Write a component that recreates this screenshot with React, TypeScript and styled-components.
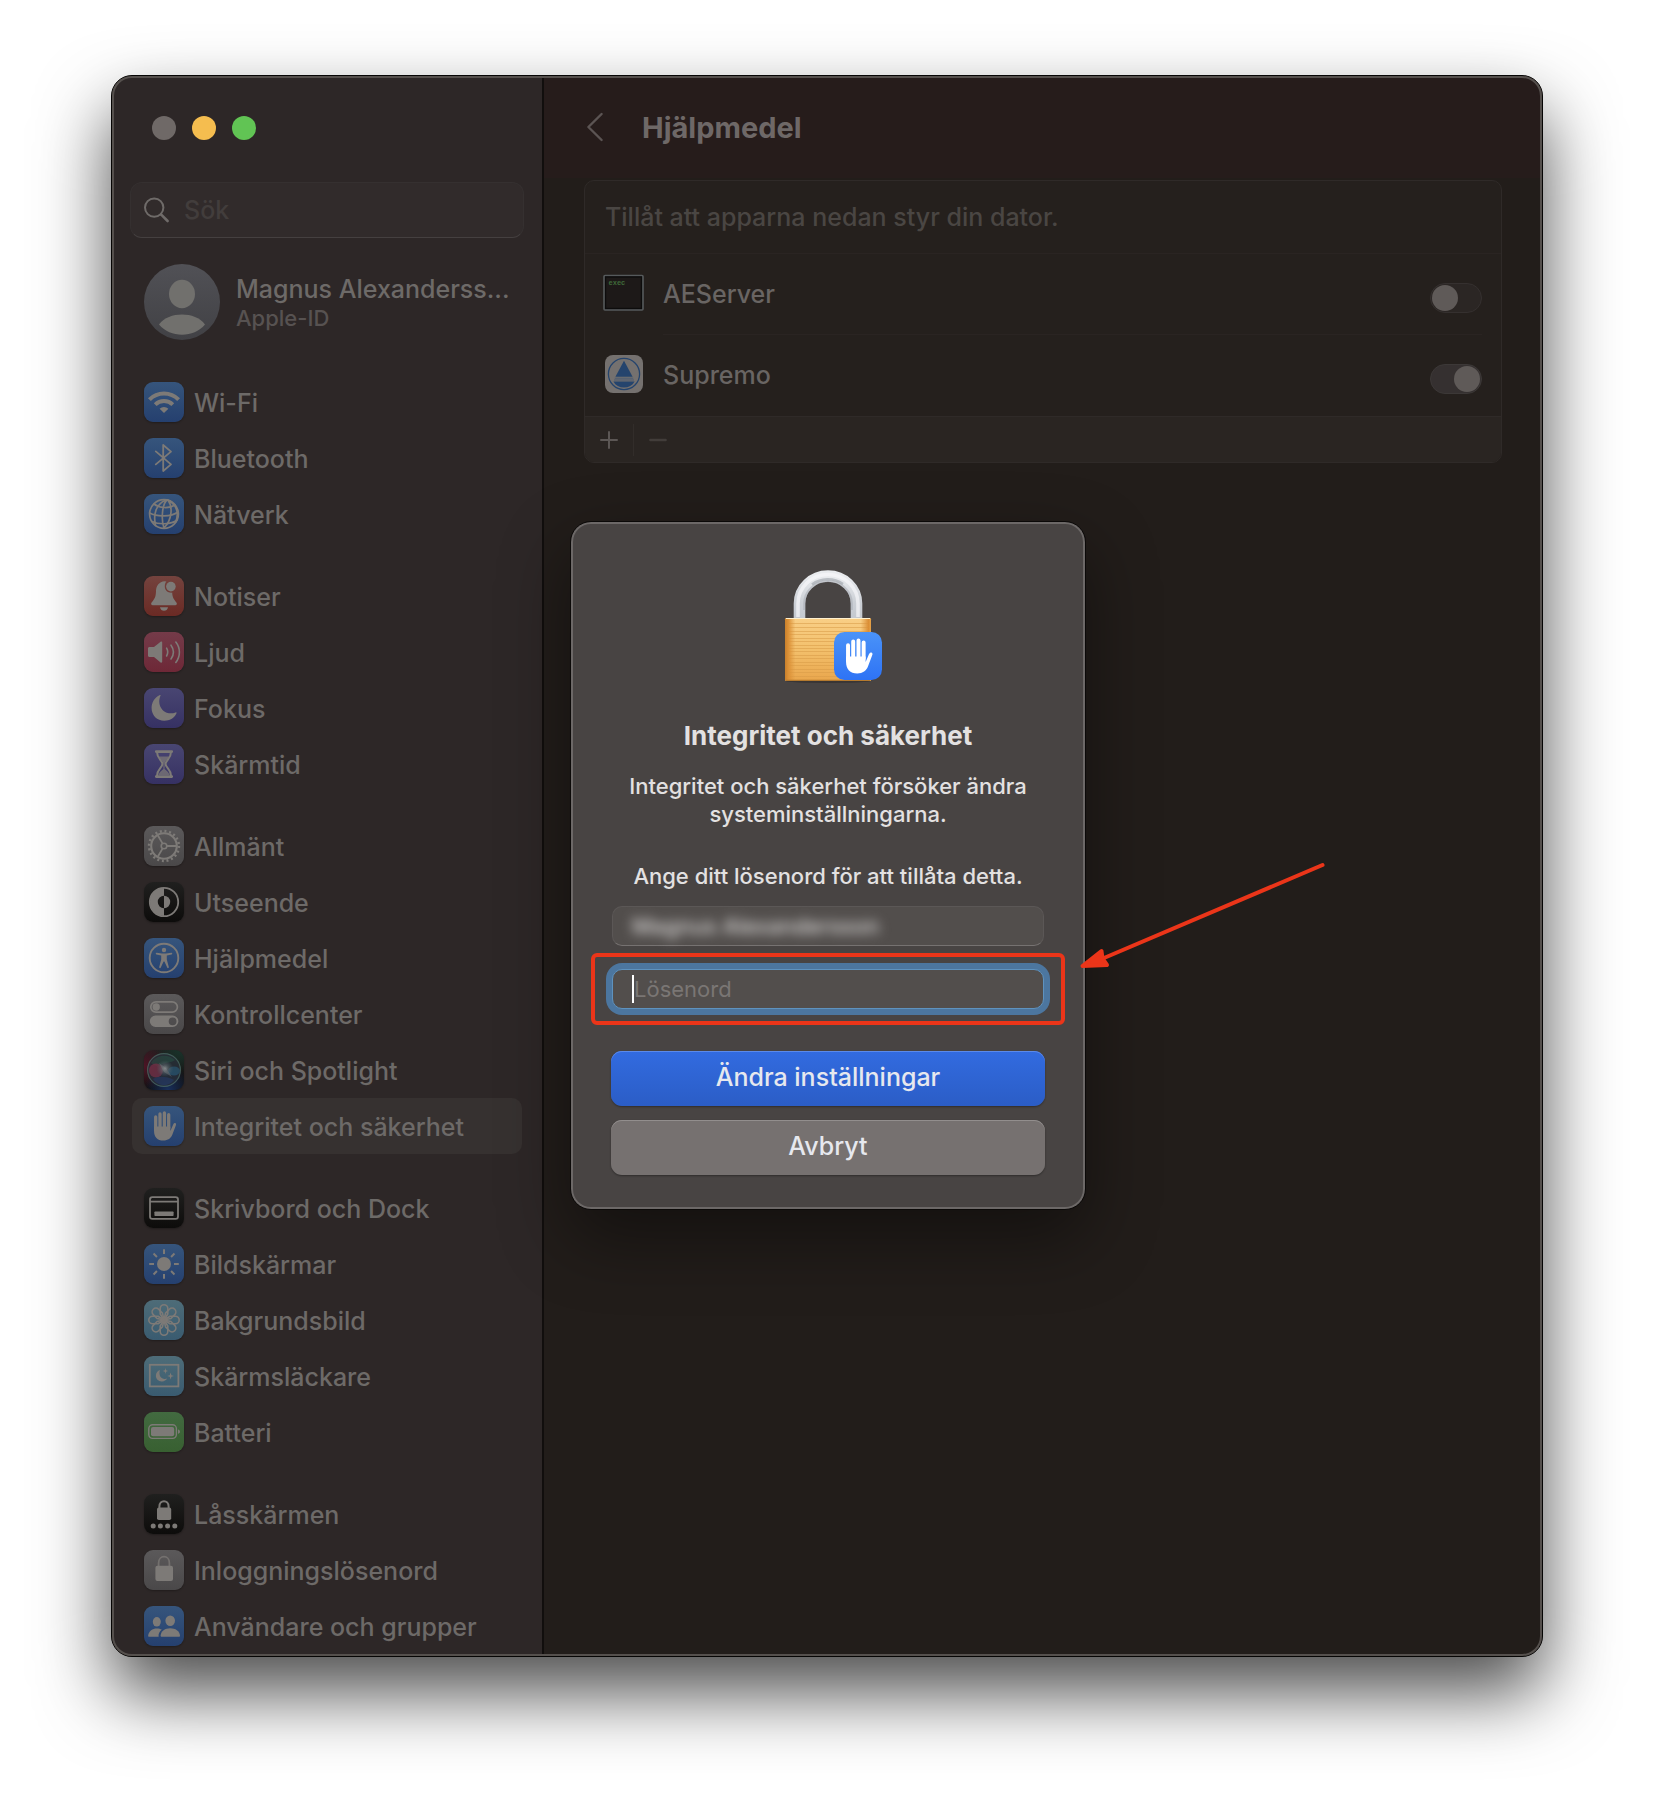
import React from "react";
import styled, { createGlobalStyle } from "styled-components";

const GlobalStyle = createGlobalStyle`
  *, *::before, *::after { box-sizing: border-box; }
  body {
    margin: 0;
    background: #ffffff;
    font-family: Inter, "Liberation Sans", sans-serif;
    font-weight: 500;
    -webkit-font-smoothing: antialiased;
  }
  h1, h2, p { margin: 0; }
  button, input { font-family: inherit; font-weight: inherit; }
`;

const text = { body: "25px", small: "22px", heading: "26px", title: "29px" };
const glyph = "#7d7a77";

/* ---------- window ---------- */

const Page = styled.div`
  padding: 75px 111px 147px;
`;

const Window = styled.div`
  position: relative;
  display: flex;
  border: 1px solid #060504;
  border-radius: 21px;
  background: #221d1a;
  box-shadow: 0 36px 72px rgba(0, 0, 0, 0.7);

  &::after {
    content: "";
    position: absolute;
    inset: 0;
    border-radius: 20px;
    box-shadow: inset 0 0 0 2px #55504d;
    pointer-events: none;
  }
`;

const Sidebar = styled.aside`
  flex: none;
  width: 432px;
  padding: 40px 18px 2px;
  border-right: 2px solid #110e0d;
  border-radius: 20px 0 0 20px;
  background: #2d2727;
`;

const Lights = styled.div`
  display: flex;
  gap: 16px;
  padding-left: 22px;
`;

const Light = styled.button<{ $color: string }>`
  width: 24px;
  height: 24px;
  padding: 0;
  border: 0;
  border-radius: 50%;
  background: ${(p) => p.$color};
`;

const SearchBox = styled.label`
  display: flex;
  align-items: center;
  gap: 14px;
  height: 56px;
  margin-top: 42px;
  padding: 0 13px;
  border: 1px solid #353030;
  border-bottom-color: #454040;
  border-radius: 12px;
  background: #312b2b;
`;

const SearchInput = styled.input`
  flex: 1;
  min-width: 0;
  padding: 0;
  border: 0;
  outline: 0;
  background: transparent;
  color: #6d6a68;
  font-size: ${text.body};
  line-height: 32px;
  &::placeholder { color: #423d3c; opacity: 1; }
`;

const Profile = styled.a`
  display: flex;
  align-items: center;
  gap: 16px;
  margin-top: 26px;
  padding-left: 14px;
  text-decoration: none;
`;

const ProfileText = styled.span`
  display: flex;
  flex-direction: column;
  white-space: nowrap;
`;

const ProfileName = styled.span`
  color: #6d6a68;
  font-size: ${text.body};
  line-height: 32px;
`;

const ProfileNote = styled.span`
  color: #575251;
  font-size: ${text.small};
  line-height: 26px;
`;

const Nav = styled.nav`
  display: flex;
  flex-direction: column;
  gap: 26px;
  margin-top: 34px;
  padding: 0 2px;
`;

const NavGroup = styled.div`
  display: flex;
  flex-direction: column;
`;

const NavItem = styled.a<{ $active: boolean }>`
  display: flex;
  align-items: center;
  gap: 10px;
  height: 56px;
  padding-left: 12px;
  border-radius: 10px;
  background: ${(p) => (p.$active ? "#363130" : "transparent")};
  color: #6d6a68;
  font-size: ${text.body};
  line-height: 32px;
  text-decoration: none;
  white-space: nowrap;
`;

const NavLabel = styled.span`
  padding-top: 2px;
`;

const Tile = styled.span<{ $from: string; $to: string }>`
  display: block;
  width: 40px;
  height: 40px;
  overflow: hidden;
  border-radius: 9px;
  background: linear-gradient(${(p) => p.$from}, ${(p) => p.$to});
  box-shadow: 0 1px 2px rgba(0, 0, 0, 0.3);
  svg { display: block; }
`;

/* ---------- content pane ---------- */

const Content = styled.main`
  flex: 1;
  min-width: 0;
`;

const TitleBar = styled.header`
  display: flex;
  align-items: center;
  gap: 38px;
  height: 102px;
  padding-left: 42px;
  border-radius: 0 20px 0 0;
  background: #261c1b;
`;

const BackButton = styled.button`
  padding: 0;
  border: 0;
  background: none;
  svg { display: block; }
`;

const Title = styled.h1`
  padding-top: 2px;
  color: #6e6867;
  font-size: ${text.title};
  font-weight: 700;
  line-height: 36px;
`;

const Card = styled.section`
  margin: 2px 40px 0;
  overflow: hidden;
  border: 1px solid #2f2a28;
  border-radius: 10px;
  background: #25201d;
`;

const CardIntro = styled.p`
  padding: 20px;
  border-bottom: 1px solid #2a2422;
  color: #4a4643;
  font-size: ${text.body};
  line-height: 32px;
`;

const AppRow = styled.label`
  display: grid;
  grid-template-columns: 42px 1fr;
  align-items: center;
  gap: 18px;
  padding: 0 19px 0 18px;
  svg { margin-bottom: 4px; }
`;

const AppRowBody = styled.span<{ $line: boolean }>`
  display: flex;
  align-items: center;
  justify-content: space-between;
  height: 81px;
  border-bottom: 1px solid ${(p) => (p.$line ? "#2a2422" : "transparent")};
  color: #696563;
  font-size: ${text.body};
  line-height: 32px;
`;

const Toggle = styled.input`
  appearance: none;
  width: 52px;
  height: 30px;
  margin: 8px 0 0;
  padding: 1px;
  border: 1px solid #35302f;
  border-radius: 15px;
  background: #2b2624;

  &::before {
    content: "";
    display: block;
    width: 26px;
    height: 26px;
    border-radius: 50%;
    background: #5f5a58;
  }
  &:checked { background: #353030; border-color: #3c3837; }
  &:checked::before { margin-left: auto; }
`;

const CardFooter = styled.div`
  display: flex;
  align-items: center;
  height: 46px;
  border-top: 1px solid #2f2a28;
  background: #2a2522;
`;

const FooterButton = styled.button`
  display: flex;
  align-items: center;
  justify-content: center;
  width: 48px;
  height: 32px;
  padding: 0;
  border: 0;
  background: none;
  & + & { border-left: 1px solid #322d2a; }
`;

/* ---------- authentication dialog ---------- */

const DialogLayer = styled.div`
  position: absolute;
  inset: 0;
  z-index: 1;
  display: flex;
  align-items: flex-start;
  justify-content: center;
  padding: 445px 0 0 2px;
`;

const Dialog = styled.form`
  display: flex;
  flex-direction: column;
  width: 516px;
  padding: 40px 40px 34px;
  border: 1px solid #0b0908;
  border-radius: 21px;
  background: #484443;
  box-shadow: inset 0 0 0 2px #6c6867, 0 28px 70px rgba(0, 0, 0, 0.42);
  color: #e3e1e1;
  text-align: center;
`;

const LockArt = styled.svg`
  align-self: center;
`;

const DialogTitle = styled.h2`
  margin-top: 30px;
  font-size: ${text.heading};
  font-weight: 700;
  line-height: 32px;
`;

const DialogText = styled.p`
  margin-top: 20px;
  font-size: ${text.small};
  line-height: 28px;
`;

const PasswordLabel = styled.label`
  margin-top: 34px;
  font-size: ${text.small};
  line-height: 28px;
`;

const Field = styled.div<{ $focused?: boolean }>`
  position: relative;
  display: flex;
  align-items: center;
  height: 40px;
  margin: ${(p) => (p.$focused ? "23px" : "16px")} 1px 0;
  padding: 0 19px;
  border: 1px solid ${(p) => (p.$focused ? "#5e92be" : "#5b5756")};
  border-bottom-color: ${(p) => (p.$focused ? "#5e92be" : "#767271")};
  border-radius: 10px;
  background: #524e4c;
  box-shadow: ${(p) => (p.$focused ? "0 0 0 6px #4c769f" : "none")};
`;

const FieldInput = styled.input<{ $blurred?: boolean }>`
  flex: 1;
  min-width: 0;
  padding: 0;
  border: 0;
  outline: 0;
  background: transparent;
  color: #dddbda;
  font-size: ${text.small};
  font-weight: ${(p) => (p.$blurred ? 500 : 400)};
  line-height: 28px;
  filter: ${(p) => (p.$blurred ? "blur(6px)" : "none")};
  &::placeholder { color: #7a7674; opacity: 1; }
`;

const Caret = styled.span`
  width: 2px;
  height: 28px;
  background: #ffffff;
`;

const Highlight = styled.span`
  position: absolute;
  inset: -17px -22px;
  border: 4px solid #eb3519;
  border-radius: 6px;
  pointer-events: none;
`;

const Arrow = styled.svg`
  position: absolute;
  left: 466px;
  top: -110px;
  pointer-events: none;
`;

const DialogButton = styled.button<{ $primary?: boolean }>`
  height: 55px;
  margin-top: ${(p) => (p.$primary ? "42px" : "14px")};
  padding: 0 0 3px;
  border: 0;
  border-radius: 11px;
  background: ${(p) => (p.$primary ? "linear-gradient(#326be0, #2b5dc6)" : "#767170")};
  box-shadow: inset 0 1px 0 ${(p) => (p.$primary ? "#5b8aea" : "#928e8d")}, 0 1px 2px rgba(0, 0, 0, 0.35);
  color: #e6e8ee;
  font-size: ${text.body};
  line-height: 32px;
`;

/* ---------- icon drawings, each on a 40 x 40 grid ---------- */

const Line = ({ w = 2, children }: { w?: number; children: React.ReactNode }) => (
  <g fill="none" stroke={glyph} strokeWidth={w} strokeLinecap="round" strokeLinejoin="round">
    {children}
  </g>
);

const Hand = ({ color = glyph }: { color?: string }) => (
  <g>
    <g stroke={color} strokeWidth="3.3" strokeLinecap="round">
      <path d="M11.7 11V24M16 8V22M20.4 7V22M24.7 8.7V22" />
    </g>
    <path
      fill={color}
      d="M10.05 20.5H26.35V25L29.2 18.4C29.8 17.2 30.7 16.8 31.5 17.2C32.2 17.6 32.2 18.3 31.9 19.2L28.3 28.8C27 32.2 24 34.6 19.4 34.6C13.4 34.6 10.05 31 10.05 25Z"
    />
  </g>
);

const icons: Record<string, React.ReactNode> = {
  wifi: (
    <>
      <g fill="none" stroke={glyph} strokeWidth="4">
        <path d="M5.4 17.6A20.4 20.4 0 0 1 34.6 17.6" />
        <path d="M11.2 22.6A12.7 12.7 0 0 1 28.8 22.6" />
      </g>
      <path d="M20 31L15.6 26.7A6.4 6.4 0 0 1 24.4 26.7Z" fill={glyph} />
    </>
  ),
  bluetooth: <Line w={1.8}><path d="M11.8 13.4L27 26.4L19.2 33V7L27 13.6L11.8 26.4" /></Line>,
  globe: (
    <Line w={1.7}>
      <circle cx="20" cy="20" r="14.4" />
      <path d="M23 6C18 10 17 26 20 34M24 6C29 13 28 26 20 34M22 6C12 10 9 20 11.5 31.5M26 7C34 13 35 20 31.5 28.5" />
      <path d="M10 10C15 14 25 15 31 11M5.6 19C13 23 27 23 34 18M8 27.5C14 30.5 27 31 33 26" />
    </Line>
  ),
  bell: (
    <>
      <path
        fill={glyph}
        d="M20.6 5.2C15 5.8 12.2 9.4 12 15C11.8 21.4 10.6 22.6 7.6 26.6C6.6 28 7.2 29.2 8.8 29.2H31.2C32.8 29.2 33.4 28 32.4 26.6C29.6 23 28.4 21.4 28.2 16.6C24 17 20.8 14.2 20.8 10.4C20.8 8.6 21.2 7 22.4 5.6Z"
      />
      <circle cx="26.9" cy="10.6" r="4.8" fill={glyph} />
      <path d="M16 31.2H24C23.6 33.6 22 34.8 20 34.8S16.4 33.6 16 31.2Z" fill={glyph} />
    </>
  ),
  sound: (
    <>
      <path d="M4 16.5C4 15.6 4.6 15 5.5 15H10L16.6 9.8C17.4 9.2 18.2 9.6 18.2 10.6V29.6C18.2 30.6 17.4 31 16.6 30.4L10 25H5.5C4.6 25 4 24.4 4 23.5Z" fill={glyph} />
      <Line w={1.6}><path d="M22.6 16.2C24 18.6 24 21.6 22.6 24M27 13.2C30 17.4 30 22.8 27 27M31.8 10C36.6 16 36.6 24.4 31.8 30.4" /></Line>
    </>
  ),
  moon: <path fill={glyph} d="M16.6 7.4C12 17 20 28.6 31.6 24.4C32.4 24.2 32.8 24.8 32.4 25.6C30 30.4 25.6 32.8 20.4 32.8C13 32.8 7.6 27.4 7.6 20C7.6 14.6 10.4 9.8 15.4 7.2C16.2 6.8 16.8 6.8 16.6 7.4Z" />,
  hourglass: (
    <>
      <Line w={2.6}><path d="M12.2 7.6H27.8M12.2 32.6H27.8" /></Line>
      <Line w={2}>
        <path d="M13 8C13 15 18.4 16 18.4 20S13 25 13 32M27 8C27 15 21.6 16 21.6 20S27 25 27 32" />
      </Line>
      <path d="M14.8 12.6H25.2C24 15.6 21 16.6 20.6 19.8V25C22 26.4 24.4 27.4 25.6 31H14.4C15.6 27.4 18 26.4 19.4 25V19.8C19 16.6 16 15.6 14.8 12.6Z" fill={glyph} opacity="0.75" />
    </>
  ),
  gear: (
    <g fill="none" stroke={glyph}>
      <circle cx="20" cy="20" r="14.9" strokeWidth="2.6" strokeDasharray="2 2.681" />
      <circle cx="20" cy="20" r="12.8" strokeWidth="2.1" />
      <circle cx="20" cy="20" r="2.8" strokeWidth="1.6" />
      <path d="M23 20H32.4M18.5 22.6L13.6 31M18.5 17.4L13.6 9" strokeWidth="1.8" />
    </g>
  ),
  appearance: (
    <>
      <circle cx="20" cy="20" r="14.2" fill="none" stroke={glyph} strokeWidth="1.8" />
      <path d="M20 6A14 14 0 0 0 20 34V26.2A6.2 6.2 0 0 1 20 13.8Z" fill={glyph} />
      <path d="M20 13.8A6.2 6.2 0 0 1 20 26.2Z" fill={glyph} />
    </>
  ),
  access: (
    <>
      <circle cx="20" cy="20" r="14.3" fill="none" stroke={glyph} strokeWidth="1.9" />
      <circle cx="20" cy="12" r="2.2" fill={glyph} />
      <path
        fill={glyph}
        d="M12.6 14.8L18 15.6H22L27.4 14.8C28.4 14.7 28.6 16.2 27.6 16.4L22.8 17.4V21.4L24.8 29C25 30.2 23.6 30.6 23.2 29.6L20.4 23.4H19.6L16.8 29.6C16.4 30.6 15 30.2 15.2 29L17.2 21.4V17.4L12.4 16.4C11.4 16.2 11.6 14.7 12.6 14.8Z"
      />
    </>
  ),
  control: (
    <>
      <rect x="6.8" y="7.8" width="26.6" height="10.4" rx="5.2" fill="none" stroke={glyph} strokeWidth="1.7" />
      <circle cx="12.2" cy="13" r="3.7" fill={glyph} />
      <path fillRule="evenodd" fill={glyph} d="M11.5 21.6H28.7A5.7 5.7 0 0 1 28.7 33H11.5A5.7 5.7 0 0 1 11.5 21.6ZM28.6 23.4A3.9 3.9 0 1 0 28.6 31.2A3.9 3.9 0 1 0 28.6 23.4Z" />
    </>
  ),
  siri: (
    <>
      <defs>
        <radialGradient id="siriRed" cx="0" cy="0.4" r="0.6"><stop offset="0" stopColor="#4d1425" /><stop offset="1" stopColor="#4d1425" stopOpacity="0" /></radialGradient>
        <radialGradient id="siriGreen" cx="0.9" cy="0" r="0.6"><stop offset="0" stopColor="#18332a" /><stop offset="1" stopColor="#18332a" stopOpacity="0" /></radialGradient>
        <radialGradient id="siriBlue" cx="0.6" cy="1" r="0.6"><stop offset="0" stopColor="#182f5c" /><stop offset="1" stopColor="#182f5c" stopOpacity="0" /></radialGradient>
        <radialGradient id="siriCore"><stop offset="0" stopColor="#a3a7a8" /><stop offset="0.4" stopColor="#77858a" stopOpacity="0.6" /><stop offset="1" stopColor="#56707a" stopOpacity="0" /></radialGradient>
      </defs>
      <rect width="40" height="40" fill="url(#siriRed)" />
      <rect width="40" height="40" fill="url(#siriGreen)" />
      <rect width="40" height="40" fill="url(#siriBlue)" />
      <g opacity="0.78">
        <circle cx="20" cy="20" r="16.4" fill="#29303a" stroke="#4c6a66" strokeWidth="1.2" />
        <path d="M7 13C11 5 24 3 31 10C28 13 18 12 14 17Z" fill="#2b5348" opacity="0.7" />
        <ellipse cx="12" cy="20.5" rx="7" ry="7" fill="#8a3650" opacity="0.75" />
        <ellipse cx="30" cy="21" rx="6" ry="4.5" fill="#2d6080" opacity="0.8" />
        <path d="M9 29C14 26 22 26 30 30C25 37 14 37 9 29Z" fill="#2a3d66" opacity="0.8" />
        <circle cx="21" cy="18.5" r="8.5" fill="url(#siriCore)" />
        <path d="M15 13L22 18L28 27L20 22Z" fill="#9aa2a4" opacity="0.4" />
      </g>
    </>
  ),
  hand: <Hand />,
  dock: (
    <>
      <rect x="6" y="9.2" width="28" height="21.6" rx="2.4" fill="none" stroke={glyph} strokeWidth="1.8" />
      <path d="M6 13.6H34" stroke={glyph} strokeWidth="1.6" />
      <rect x="10.4" y="23.4" width="19.2" height="4.6" rx="0.8" fill={glyph} />
    </>
  ),
  sun: (
    <>
      <circle cx="20" cy="20" r="7" fill={glyph} />
      <g stroke={glyph} strokeWidth="2">
        {[0, 45, 90, 135, 180, 225, 270, 315].map((a) => (
          <path key={a} d="M20 5.2V10" transform={`rotate(${a} 20 20)`} />
        ))}
      </g>
    </>
  ),
  flower: (
    <Line w={1.6}>
      {[0, 45, 90, 135, 180, 225, 270, 315].map((a) => (
        <path key={a} d="M20 20L16.2 14V8.6A3.8 3.8 0 0 1 23.8 8.6V14Z" transform={`rotate(${a} 20 20)`} />
      ))}
      <circle cx="20" cy="20" r="2.6" />
    </Line>
  ),
  saver: (
    <>
      <rect x="5.8" y="8.8" width="28.6" height="21.6" fill="none" stroke={glyph} strokeWidth="1.8" />
      <path fill={glyph} d="M16 14C14 20 18 24.4 23.2 22.6C22 24.6 19.8 25.6 17.6 25.4C14.2 25.2 11.8 22.6 11.9 19.4C12 16.8 13.6 14.8 16 14Z" />
      <path fill={glyph} d="M21.4 12L22 14.2L24 15L22 15.8L21.4 18L20.8 15.8L18.8 15L20.8 14.2ZM26.6 16.4L27.4 19.2L30 20L27.4 20.8L26.6 23.6L25.8 20.8L23.2 20L25.8 19.2Z" />
    </>
  ),
  battery: (
    <>
      <rect x="4.8" y="12.8" width="27.6" height="13.6" rx="3.8" fill="none" stroke={glyph} strokeWidth="1.4" />
      <rect x="7" y="15" width="23.2" height="9.2" rx="2" fill={glyph} />
      <path d="M34 17.4C36.6 18 36.6 21.2 34 21.8Z" fill={glyph} />
    </>
  ),
  lockDots: (
    <>
      <path d="M15.4 15V12.4C15.4 5.4 24.6 5.4 24.6 12.4V15" fill="none" stroke={glyph} strokeWidth="2" />
      <rect x="13" y="13.6" width="14.2" height="12.4" rx="1.8" fill={glyph} />
      {[9.2, 16.4, 23.6, 30.8].map((x) => <circle key={x} cx={x} cy="32" r="2.5" fill={glyph} />)}
    </>
  ),
  lock: (
    <>
      <path d="M14.6 17V13C14.6 4.6 25.4 4.6 25.4 13V17" fill="none" stroke={glyph} strokeWidth="1.8" opacity="0.75" />
      <rect x="11.4" y="15.8" width="17.6" height="15.2" rx="2" fill={glyph} />
    </>
  ),
  users: (
    <g fill={glyph}>
      <ellipse cx="12.8" cy="15.8" rx="4" ry="4.8" />
      <ellipse cx="26.2" cy="14.8" rx="4.8" ry="5.2" />
      <path d="M16.6 29.4C17 25 21 22.2 26.2 22.2S35.6 25 36 29.4C36 30.4 35.6 30.8 34.8 30.8H17.8C17 30.8 16.6 30.4 16.6 29.4Z" />
      <path d="M14.6 30.8H5.4C4.4 30.8 4 30.2 4.2 29.2C5 24.8 8.4 22.4 12.8 22.4C14.8 22.4 16.4 22.8 17.8 23.6C15.6 25.4 14.2 27.8 14.6 30.8Z" />
    </g>
  ),
};

const Glyph = ({ name }: { name: string }) => (
  <svg width="40" height="40" viewBox="0 0 40 40" aria-hidden="true">{icons[name]}</svg>
);

/* ---------- data ---------- */

type Item = { label: string; icon: string; tint: string; active?: boolean };

const tints: Record<string, [string, string]> = {
  blue: ["#36557c", "#25406f"],
  red: ["#74433e", "#6b2a24"],
  pink: ["#743b49", "#6e2837"],
  indigo: ["#494672", "#363163"],
  gray: ["#5b595a", "#4a4849"],
  black: ["#20201f", "#0d0c0b"],
  teal: ["#4e6c78", "#3a5b70"],
  green: ["#426a40", "#386031"],
};

const groups: Item[][] = [
  [
    { label: "Wi-Fi", icon: "wifi", tint: "blue" },
    { label: "Bluetooth", icon: "bluetooth", tint: "blue" },
    { label: "Nätverk", icon: "globe", tint: "blue" },
  ],
  [
    { label: "Notiser", icon: "bell", tint: "red" },
    { label: "Ljud", icon: "sound", tint: "pink" },
    { label: "Fokus", icon: "moon", tint: "indigo" },
    { label: "Skärmtid", icon: "hourglass", tint: "indigo" },
  ],
  [
    { label: "Allmänt", icon: "gear", tint: "gray" },
    { label: "Utseende", icon: "appearance", tint: "black" },
    { label: "Hjälpmedel", icon: "access", tint: "blue" },
    { label: "Kontrollcenter", icon: "control", tint: "gray" },
    { label: "Siri och Spotlight", icon: "siri", tint: "black" },
    { label: "Integritet och säkerhet", icon: "hand", tint: "blue", active: true },
  ],
  [
    { label: "Skrivbord och Dock", icon: "dock", tint: "black" },
    { label: "Bildskärmar", icon: "sun", tint: "blue" },
    { label: "Bakgrundsbild", icon: "flower", tint: "teal" },
    { label: "Skärmsläckare", icon: "saver", tint: "teal" },
    { label: "Batteri", icon: "battery", tint: "green" },
  ],
  [
    { label: "Låsskärmen", icon: "lockDots", tint: "black" },
    { label: "Inloggningslösenord", icon: "lock", tint: "gray" },
    { label: "Användare och grupper", icon: "users", tint: "blue" },
  ],
];

/* ---------- larger drawings ---------- */

const Avatar = () => (
  <svg width="76" height="76" viewBox="0 0 76 76" aria-hidden="true">
    <defs>
      <linearGradient id="avatarBg" x1="0" y1="0" x2="0" y2="1">
        <stop offset="0" stopColor="#515156" />
        <stop offset="1" stopColor="#414145" />
      </linearGradient>
    </defs>
    <circle cx="38" cy="38" r="38" fill="url(#avatarBg)" />
    <ellipse cx="38" cy="30" rx="13" ry="14.2" fill="#71706d" />
    <path d="M15 60.6C20 53.6 29 50.6 38 50.6S56 53.6 61 60.6C55 67.6 47 70.8 38 70.8S21 67.6 15 60.6Z" fill="#71706d" />
  </svg>
);

const ServerIcon = () => (
  <svg width="42" height="38" viewBox="0 0 42 38" aria-hidden="true">
    <rect x="1" y="1.5" width="39" height="34.5" rx="1" fill="#1d1918" stroke="#565a5c" strokeWidth="1.6" />
    <rect x="2.6" y="3" width="35.8" height="31.4" fill="none" stroke="#0d0c0c" strokeWidth="1.2" />
    <text x="5.5" y="11" fill="#3f6a3a" fontFamily="Liberation Mono, monospace" fontSize="7" fontWeight="700">exec</text>
  </svg>
);

const SupremoIcon = () => (
  <svg width="42" height="38" viewBox="0 0 42 38" aria-hidden="true">
    <rect x="2" y="0" width="38" height="38" rx="8" fill="#75716f" />
    <circle cx="21" cy="19" r="15.6" fill="none" stroke="#25446d" strokeWidth="1.3" />
    <path d="M21 5.8L29.6 21.8H12.4Z" fill="#25446d" />
    <path d="M11.8 23.2H30.2M11 25H31" stroke="#4a5a72" strokeWidth="1" />
    <path d="M10.4 26.4H31.6C29.4 30.4 25.6 32.4 21 32.4S12.6 30.4 10.4 26.4Z" fill="#25446d" />
  </svg>
);

const Padlock = () => (
  <LockArt width="128" height="128" viewBox="0 0 128 128" aria-hidden="true">
    <defs>
      <linearGradient id="brass" x1="0" y1="0" x2="0" y2="1">
        <stop offset="0" stopColor="#f9cf86" />
        <stop offset="0.5" stopColor="#f3c06c" />
        <stop offset="1" stopColor="#e9a64c" />
      </linearGradient>
      <linearGradient id="brassEdge" x1="0" y1="0" x2="1" y2="0">
        <stop offset="0" stopColor="#c87f2b" />
        <stop offset="0.04" stopColor="#dc9238" />
        <stop offset="0.12" stopColor="#dc9238" stopOpacity="0" />
        <stop offset="0.88" stopColor="#dc9238" stopOpacity="0" />
        <stop offset="0.97" stopColor="#db8f36" />
        <stop offset="1" stopColor="#e5a248" />
      </linearGradient>
      <linearGradient id="steel" x1="0" y1="0" x2="0" y2="1">
        <stop offset="0" stopColor="#e9ebee" />
        <stop offset="0.6" stopColor="#ccd0d6" />
        <stop offset="1" stopColor="#c3c8cf" />
      </linearGradient>
      <linearGradient id="badge" x1="0" y1="0" x2="0" y2="1">
        <stop offset="0" stopColor="#4a93f8" />
        <stop offset="1" stopColor="#2e73f5" />
      </linearGradient>
    </defs>
    <ellipse cx="64" cy="119" rx="42" ry="2" fill="#2a2625" opacity="0.5" />
    <g fill="none">
      <path d="M35.5 57V41.5A28.5 27.5 0 0 1 92.5 41.5V57" stroke="url(#steel)" strokeWidth="11.6" />
      <path d="M40.2 48V41.5A23.8 22.4 0 0 1 87.8 41.5V48" stroke="#a3a8af" strokeWidth="2" opacity="0.5" />
      <path d="M34 55V41.5A30 29 0 0 1 94 41.5V55" stroke="#f6f7f9" strokeWidth="3.6" opacity="0.7" />
      <path d="M48 22.5A26 25 0 0 1 79 22" stroke="#8e949c" strokeWidth="2.6" opacity="0.5" />
    </g>
    <rect x="21" y="56" width="86" height="63" rx="1.5" fill="url(#brass)" />
    <g stroke="#d99c48" strokeWidth="1" opacity="0.55">
      {[61, 65, 69, 72, 76, 79, 83, 86, 89, 93, 96, 100, 103, 107, 110, 114].map((y) => (
        <path key={y} d={`M21 ${y}.5H107`} />
      ))}
    </g>
    <rect x="21" y="56" width="86" height="63" rx="1.5" fill="url(#brassEdge)" />
    <path d="M22 56.5H106" stroke="#fff1cf" strokeWidth="1.2" />
    <path d="M22 118.4H106" stroke="#b57a2e" strokeWidth="1.2" />
    <rect x="70" y="70" width="48" height="48" rx="10.5" fill="url(#badge)" />
    <g transform="translate(70 70) scale(1.2)"><Hand color="#ffffff" /></g>
  </LockArt>
);

/* ---------- page ---------- */

export default function App() {
  return (
    <>
      <GlobalStyle />
      <Page>
        <Window>
          <Sidebar>
            <Lights>
              <Light type="button" $color="#6f6967" aria-label="Stäng" />
              <Light type="button" $color="#f5bd4f" aria-label="Minimera" />
              <Light type="button" $color="#61c454" aria-label="Zooma" />
            </Lights>
            <SearchBox>
              <svg width="26" height="26" viewBox="0 0 26 26" fill="none" stroke="#6f6b69" aria-hidden="true">
                <circle cx="10.2" cy="10.6" r="9.2" strokeWidth="2" />
                <path d="M17 17.4L23.6 24" strokeWidth="2.6" strokeLinecap="round" />
              </svg>
              <SearchInput type="search" placeholder="Sök" aria-label="Sök" />
            </SearchBox>
            <Profile href="#apple-id">
              <Avatar />
              <ProfileText>
                <ProfileName>Magnus Alexanderss...</ProfileName>
                <ProfileNote>Apple-ID</ProfileNote>
              </ProfileText>
            </Profile>
            <Nav aria-label="Inställningar">
              {groups.map((group) => (
                <NavGroup key={group[0].label}>
                  {group.map((item) => (
                    <NavItem
                      key={item.label}
                      href={`#${item.icon}`}
                      $active={!!item.active}
                      aria-current={item.active ? "page" : undefined}
                    >
                      <Tile $from={tints[item.tint][0]} $to={tints[item.tint][1]}>
                        <Glyph name={item.icon} />
                      </Tile>
                      <NavLabel>{item.label}</NavLabel>
                    </NavItem>
                  ))}
                </NavGroup>
              ))}
            </Nav>
          </Sidebar>

          <Content>
            <TitleBar>
              <BackButton type="button" aria-label="Tillbaka">
                <svg width="18" height="30" viewBox="0 0 18 30" fill="none" aria-hidden="true">
                  <path d="M15.6 2L2.4 15L15.6 28" stroke="#5b5453" strokeWidth="2.4" strokeLinecap="round" strokeLinejoin="round" />
                </svg>
              </BackButton>
              <Title>Hjälpmedel</Title>
            </TitleBar>
            <Card>
              <CardIntro>Tillåt att apparna nedan styr din dator.</CardIntro>
              <AppRow>
                <ServerIcon />
                <AppRowBody $line>
                  AEServer
                  <Toggle type="checkbox" role="switch" />
                </AppRowBody>
              </AppRow>
              <AppRow>
                <SupremoIcon />
                <AppRowBody $line={false}>
                  Supremo
                  <Toggle type="checkbox" role="switch" defaultChecked />
                </AppRowBody>
              </AppRow>
              <CardFooter>
                <FooterButton type="button" aria-label="Lägg till">
                  <svg width="18" height="18" viewBox="0 0 18 18" stroke="#5c5755" strokeWidth="2" strokeLinecap="round" aria-hidden="true">
                    <path d="M1 9H17M9 1V17" />
                  </svg>
                </FooterButton>
                <FooterButton type="button" aria-label="Ta bort">
                  <svg width="18" height="18" viewBox="0 0 18 18" stroke="#423d3a" strokeWidth="2.4" strokeLinecap="round" aria-hidden="true">
                    <path d="M1.4 9H16.6" />
                  </svg>
                </FooterButton>
              </CardFooter>
            </Card>
          </Content>

          <DialogLayer>
            <Dialog role="dialog" aria-labelledby="dialog-title" onSubmit={(e) => e.preventDefault()}>
              <Padlock />
              <DialogTitle id="dialog-title">Integritet och säkerhet</DialogTitle>
              <DialogText>
                Integritet och säkerhet försöker ändra
                <br />
                systeminställningarna.
              </DialogText>
              <PasswordLabel htmlFor="password">Ange ditt lösenord för att tillåta detta.</PasswordLabel>
              <Field>
                <FieldInput type="text" defaultValue="Magnus Alexandersson" aria-label="Användarnamn" $blurred />
              </Field>
              <Field $focused>
                <Caret />
                <FieldInput id="password" type="password" placeholder="Lösenord" />
                <Highlight />
                <Arrow width="252" height="114" viewBox="0 0 252 114" aria-hidden="true">
                  <path d="M243.5 5L25 98" stroke="#eb3519" strokeWidth="4" strokeLinecap="round" />
                  <path
                    d="M3.5 106L22.5 91L23.5 98.5L28 105Z"
                    fill="#eb3519"
                    stroke="#eb3519"
                    strokeWidth="4"
                    strokeLinejoin="round"
                  />
                </Arrow>
              </Field>
              <DialogButton type="submit" $primary>Ändra inställningar</DialogButton>
              <DialogButton type="button">Avbryt</DialogButton>
            </Dialog>
          </DialogLayer>
        </Window>
      </Page>
    </>
  );
}
